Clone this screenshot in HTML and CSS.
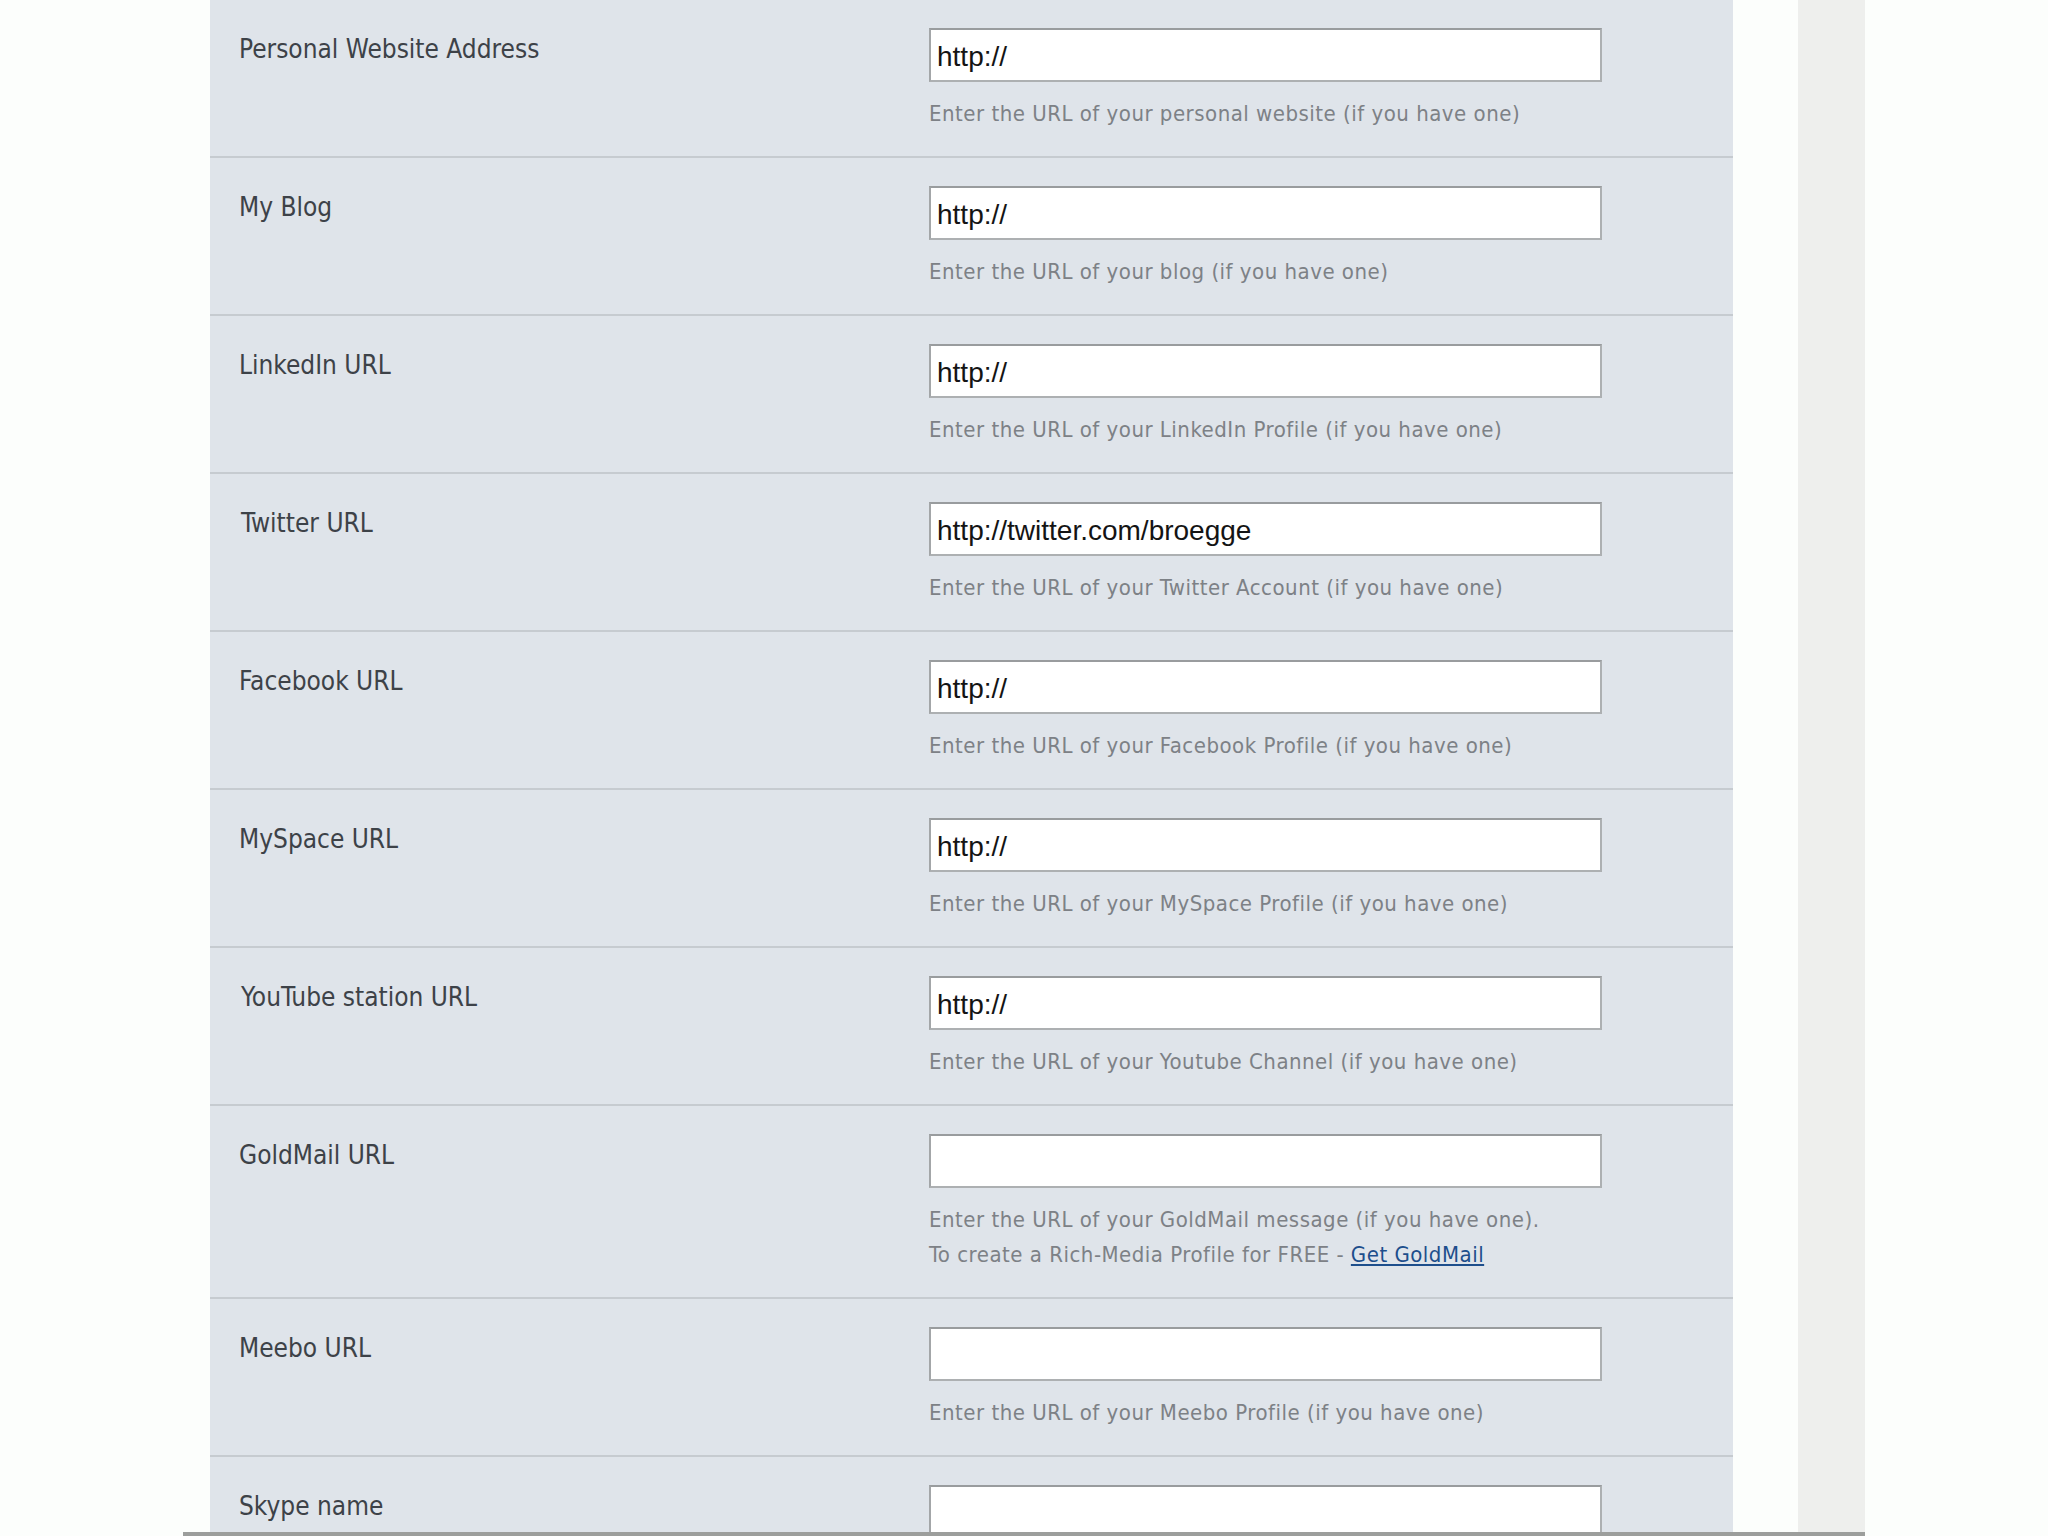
FILE: index.html
```html
<!DOCTYPE html>
<html lang="en">
<head>
<meta charset="utf-8">
<title>Profile links</title>
<link rel="stylesheet" href="styles.css">
</head>
<body>
<div class="page">
  <div class="gutter-left"></div>
  <div class="panel">
    <div class="row">
      <div class="label">Personal Website Address</div>
      <div class="field">
        <input class="text-input" type="text" value="http://">
        <div class="help">Enter the URL of your personal website (if you have one)</div>
      </div>
    </div>
    <div class="row">
      <div class="label">My Blog</div>
      <div class="field">
        <input class="text-input" type="text" value="http://">
        <div class="help">Enter the URL of your blog (if you have one)</div>
      </div>
    </div>
    <div class="row">
      <div class="label">LinkedIn URL</div>
      <div class="field">
        <input class="text-input" type="text" value="http://">
        <div class="help">Enter the URL of your LinkedIn Profile (if you have one)</div>
      </div>
    </div>
    <div class="row">
      <div class="label label-shift">Twitter URL</div>
      <div class="field">
        <input class="text-input" type="text" value="http://twitter.com/broegge">
        <div class="help">Enter the URL of your Twitter Account (if you have one)</div>
      </div>
    </div>
    <div class="row">
      <div class="label">Facebook URL</div>
      <div class="field">
        <input class="text-input" type="text" value="http://">
        <div class="help">Enter the URL of your Facebook Profile (if you have one)</div>
      </div>
    </div>
    <div class="row">
      <div class="label">MySpace URL</div>
      <div class="field">
        <input class="text-input" type="text" value="http://">
        <div class="help">Enter the URL of your MySpace Profile (if you have one)</div>
      </div>
    </div>
    <div class="row">
      <div class="label label-shift">YouTube station URL</div>
      <div class="field">
        <input class="text-input" type="text" value="http://">
        <div class="help">Enter the URL of your Youtube Channel (if you have one)</div>
      </div>
    </div>
    <div class="row">
      <div class="label">GoldMail URL</div>
      <div class="field">
        <input class="text-input" type="text" value="">
        <div class="help">Enter the URL of your GoldMail message (if you have one).<br>To create a Rich-Media Profile for FREE - <a class="help-link" href="#">Get GoldMail</a></div>
      </div>
    </div>
    <div class="row">
      <div class="label">Meebo URL</div>
      <div class="field">
        <input class="text-input" type="text" value="">
        <div class="help">Enter the URL of your Meebo Profile (if you have one)</div>
      </div>
    </div>
    <div class="row row-last">
      <div class="label">Skype name</div>
      <div class="field">
        <input class="text-input" type="text" value="">
      </div>
    </div>
  </div>
  <div class="gutter-mid"></div>
  <div class="strip"></div>
</div>
</body>
</html>
```

FILE: styles.css
```css
html, body {
  margin: 0;
  padding: 0;
  background: #fcfefc;
}

.page {
  display: flex;
  margin-left: 183px;
  width: 1682px;
  height: 1532px;
  overflow: hidden;
  border-bottom: 4px solid #9c9e9c;
  background: #fcfefc;
}

.gutter-left {
  width: 27px;
  flex: none;
}

.panel {
  width: 1523px;
  flex: none;
  background: #dfe4ea;
}

.gutter-mid {
  width: 65px;
  flex: none;
}

.strip {
  width: 67px;
  flex: none;
  background: #eeefed;
}

.row {
  display: grid;
  grid-template-columns: 690px 673px;
  padding: 28px 0 25px 29px;
  border-bottom: 2px solid #c6cbd0;
}

.row-last {
  border-bottom: none;
}

.label {
  font-family: "DejaVu Sans", "Verdana", sans-serif;
  font-stretch: condensed;
  font-size: 26px;
  line-height: 30px;
  color: #3d4248;
  padding-top: 6px;
}

.label-shift {
  padding-left: 2px;
}

.field {
  display: flex;
  flex-direction: column;
}

.text-input {
  box-sizing: border-box;
  width: 673px;
  height: 54px;
  margin: 0;
  padding: 3px 6px 0 6px;
  border: 2px solid #adb0b2;
  border-top-color: #999c9e;
  border-left-color: #a3a6a8;
  background: #ffffff;
  font-family: "Liberation Sans", Arial, sans-serif;
  font-size: 28px;
  color: #141414;
  outline: none;
}

.help {
  margin-top: 14px;
  font-family: "DejaVu Sans", "Verdana", sans-serif;
  font-stretch: condensed;
  font-size: 22px;
  letter-spacing: 0.5px;
  line-height: 35px;
  color: #7d8186;
}

.help-link {
  color: #1d4e8c;
  text-decoration: underline;
}
```
